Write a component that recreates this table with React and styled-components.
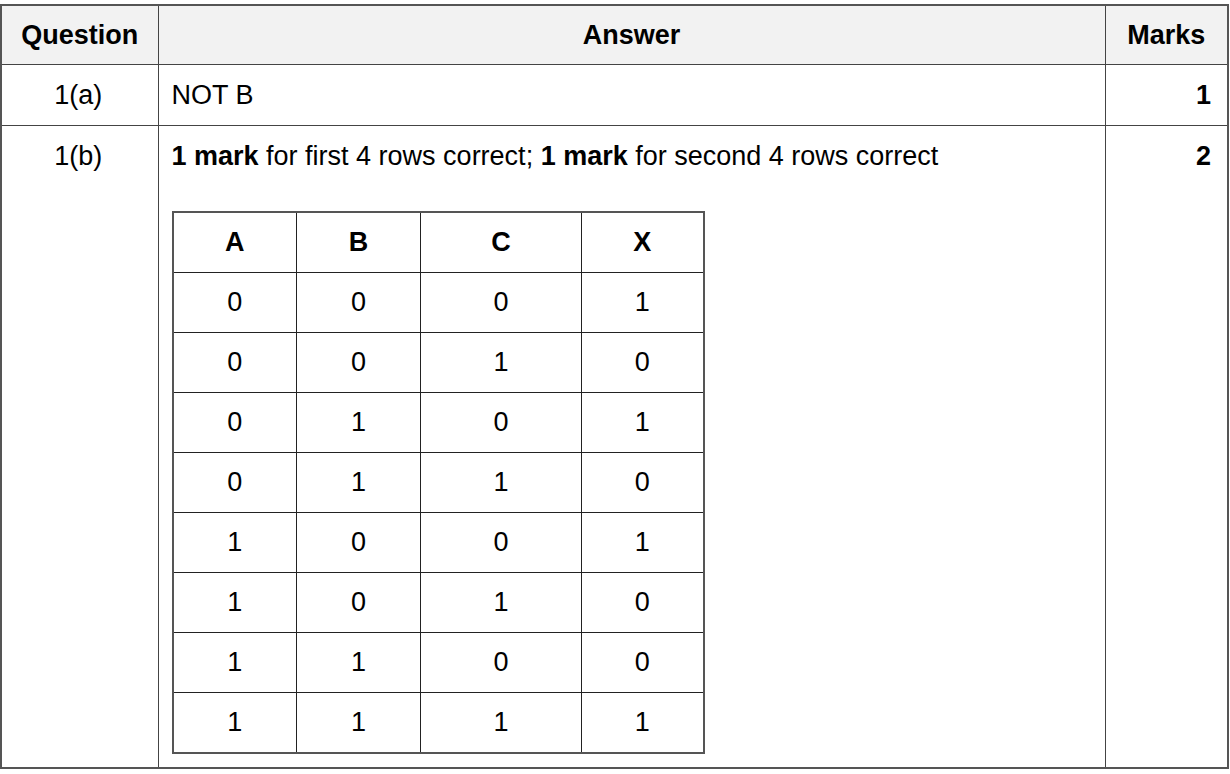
import styled, { createGlobalStyle } from "styled-components";

const GlobalStyle = createGlobalStyle`
  body {
    margin: 0;
    background: #ffffff;
    font-family: "Liberation Sans", Arial, sans-serif;
    color: #000;
  }
`;

const Page = styled.div`
  padding-top: 4px;
  width: 1227px;
`;

const MarkTable = styled.table`
  width: 1227px;
  border-collapse: collapse;
  table-layout: fixed;
  font-size: 27px;
  border: 2px solid #555;
`;

const HeadCell = styled.th`
  height: 58px;
  background: #f2f2f2;
  border: 1px solid #444;
  font-weight: bold;
  text-align: center;
  padding: 0;
`;

const Cell = styled.td`
  border: 1px solid #444;
  vertical-align: ${(p) => (p.$top ? "top" : "middle")};
  text-align: ${(p) => p.$align || "left"};
  font-weight: ${(p) => (p.$bold ? "bold" : "normal")};
  padding: ${(p) => (p.$top ? "15px 16px 13px 13px" : "0 16px 0 13px")};
  height: ${(p) => p.$h || "auto"};
  line-height: 31px;
`;

const Prompt = styled.p`
  margin: 0 0 39px;
  line-height: 31px;
`;

const TruthTable = styled.table`
  border-collapse: collapse;
  table-layout: fixed;
  width: 531px;
  border: 2px solid #555;
  font-size: 27px;
`;

const TruthHead = styled.th`
  height: 59px;
  border: 1px solid #222;
  font-weight: bold;
  text-align: center;
  padding: 0;
`;

const TruthCell = styled.td`
  height: 59px;
  border: 1px solid #222;
  text-align: center;
  padding: 0;
`;

const rows = [
  [0, 0, 0, 1],
  [0, 0, 1, 0],
  [0, 1, 0, 1],
  [0, 1, 1, 0],
  [1, 0, 0, 1],
  [1, 0, 1, 0],
  [1, 1, 0, 0],
  [1, 1, 1, 1],
];

const App = () => {
  return (
    <Page>
      <GlobalStyle />
      <MarkTable>
        <colgroup>
          <col style={{ width: 157 }} />
          <col style={{ width: 947 }} />
          <col style={{ width: 123 }} />
        </colgroup>
        <thead>
          <tr>
            <HeadCell>Question</HeadCell>
            <HeadCell>Answer</HeadCell>
            <HeadCell>Marks</HeadCell>
          </tr>
        </thead>
        <tbody>
          <tr>
            <Cell $align="center" $h="60px">1(a)</Cell>
            <Cell>NOT B</Cell>
            <Cell $align="right" $bold>1</Cell>
          </tr>
          <tr>
            <Cell $top $align="center">1(b)</Cell>
            <Cell $top>
              <Prompt>
                <b>1 mark</b> for first 4 rows correct; <b>1 mark</b> for second 4 rows correct
              </Prompt>
              <TruthTable>
                <colgroup>
                  <col style={{ width: 124 }} />
                  <col style={{ width: 124 }} />
                  <col style={{ width: 161 }} />
                  <col style={{ width: 122 }} />
                </colgroup>
                <thead>
                  <tr>
                    <TruthHead>A</TruthHead>
                    <TruthHead>B</TruthHead>
                    <TruthHead>C</TruthHead>
                    <TruthHead>X</TruthHead>
                  </tr>
                </thead>
                <tbody>
                  {rows.map((r, i) => (
                    <tr key={i}>
                      {r.map((v, j) => (
                        <TruthCell key={j}>{v}</TruthCell>
                      ))}
                    </tr>
                  ))}
                </tbody>
              </TruthTable>
            </Cell>
            <Cell $top $align="right" $bold>2</Cell>
          </tr>
        </tbody>
      </MarkTable>
    </Page>
  );
};

export default App;
